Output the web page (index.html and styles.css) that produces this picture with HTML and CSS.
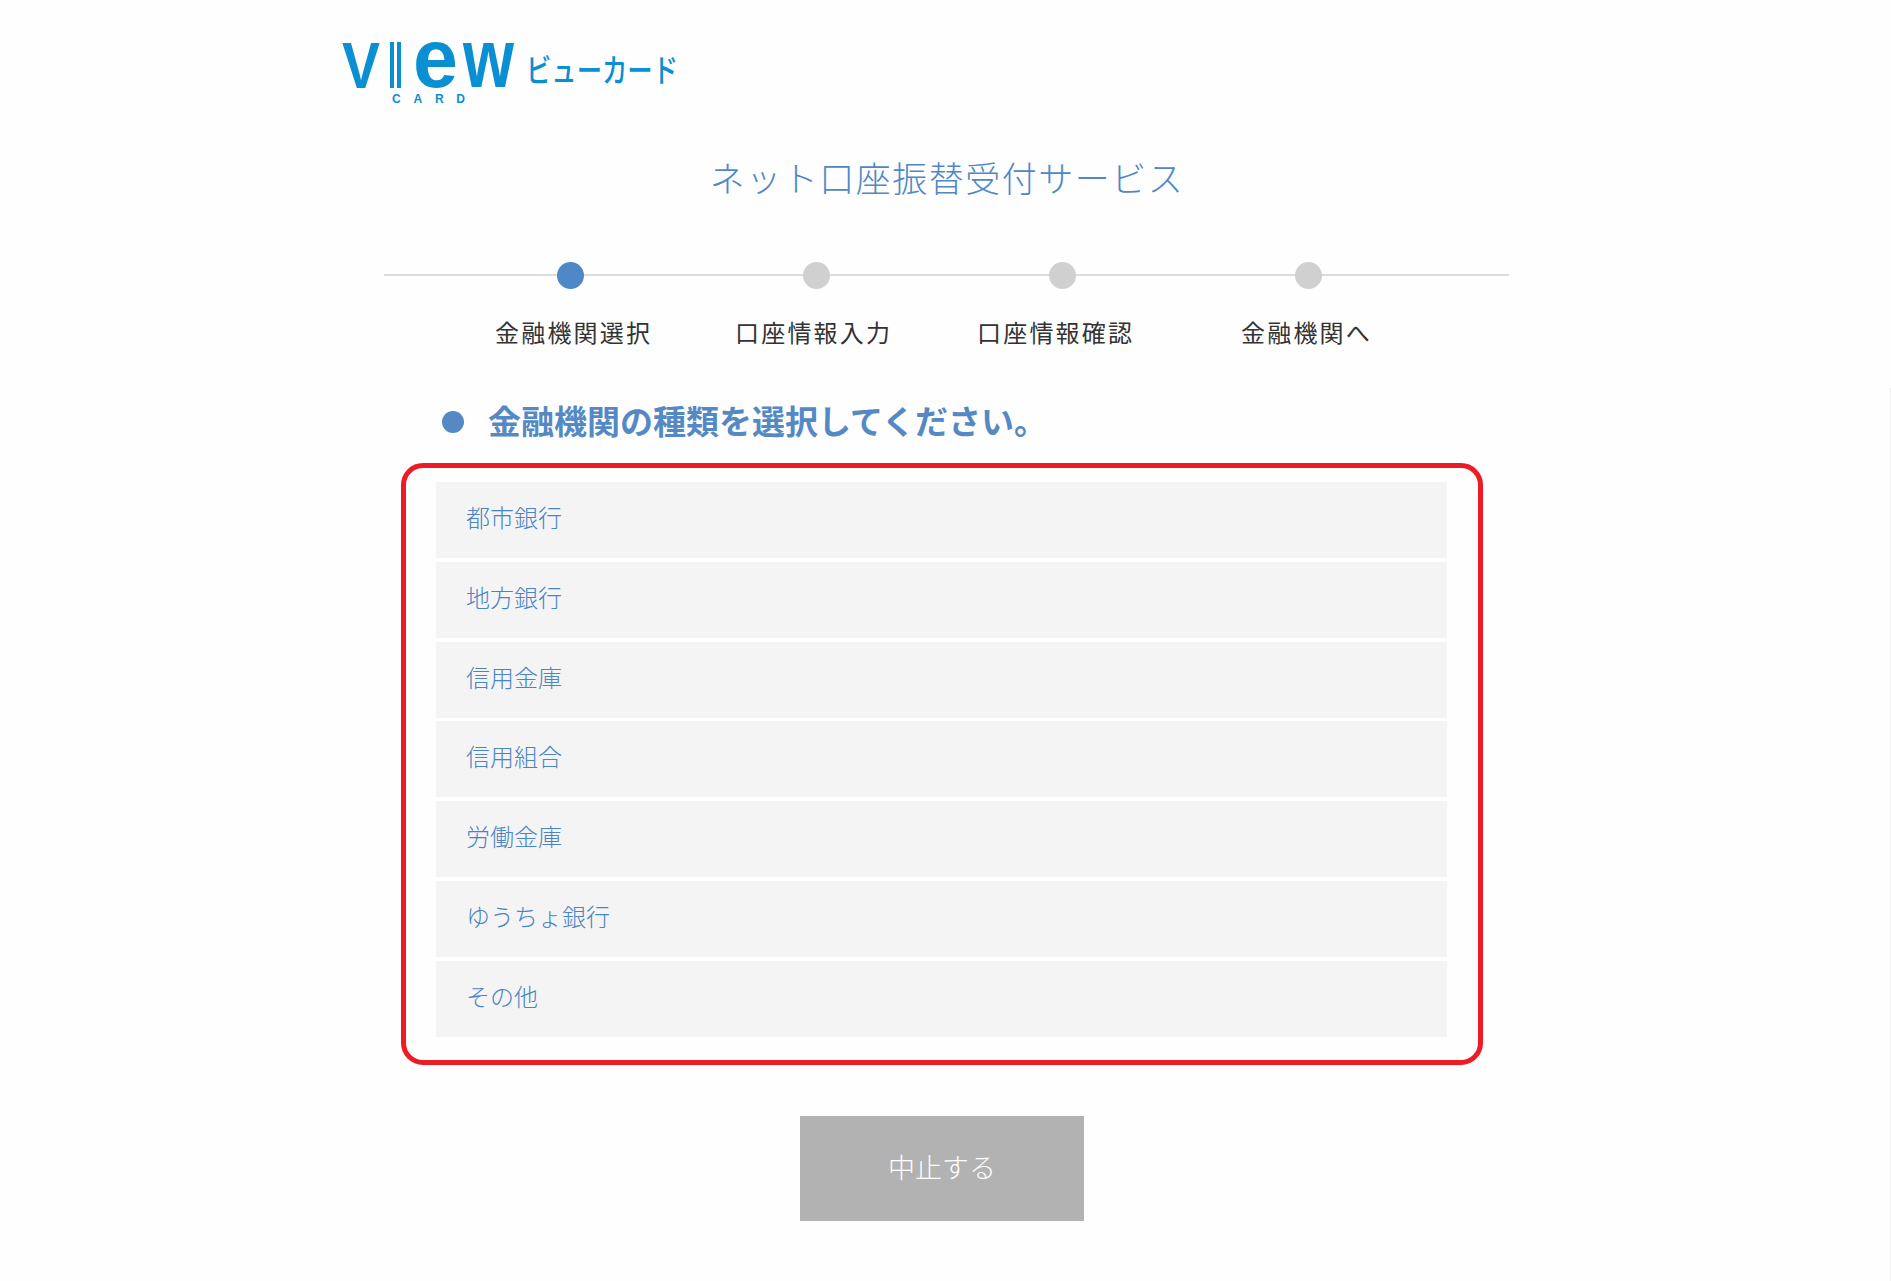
FILE: index.html
```html
<!DOCTYPE html>
<html lang="ja">
<head>
<meta charset="utf-8">
<title>ネット口座振替受付サービス</title>
<link rel="stylesheet" href="styles.css">
</head>
<body>
<div class="page">
  <header class="logo-bar">
    <svg class="logo" width="380" height="110" viewBox="-5 -35 380 110" role="img" aria-label="VIEW CARD ビューカード">
      <text class="logo-mark" x="-1" y="51" textLength="38" lengthAdjust="spacingAndGlyphs">V</text>
      <rect class="logo-fill" x="47" y="5" width="4" height="46"></rect>
      <rect class="logo-fill" x="54" y="5" width="4" height="46"></rect>
      <text class="logo-mark logo-low" x="70" y="50" textLength="45" lengthAdjust="spacingAndGlyphs">e</text>
      <text class="logo-mark logo-low" x="120" y="50" textLength="51" lengthAdjust="spacingAndGlyphs">w</text>
      <text class="logo-card" x="49" y="66" textLength="73">CARD</text>
      <text class="logo-kana" x="183" y="45" textLength="152" lengthAdjust="spacingAndGlyphs">ビューカード</text>
    </svg>
  </header>

  <h1 class="title">ネット口座振替受付サービス</h1>

  <div class="stepper">
    <div class="dots">
      <span class="dot dot-active"></span>
      <span class="dot"></span>
      <span class="dot"></span>
      <span class="dot"></span>
    </div>
    <div class="labels">
      <span>金融機関選択</span>
      <span>口座情報入力</span>
      <span>口座情報確認</span>
      <span>金融機関へ</span>
    </div>
  </div>

  <h2 class="heading"><span class="bullet"></span>金融機関の種類を選択してください。</h2>

  <div class="box">
    <a class="row">都市銀行</a>
    <a class="row">地方銀行</a>
    <a class="row">信用金庫</a>
    <a class="row">信用組合</a>
    <a class="row">労働金庫</a>
    <a class="row">ゆうちょ銀行</a>
    <a class="row">その他</a>
  </div>

  <div class="actions">
    <button class="cancel" type="button">中止する</button>
  </div>
</div>
<div class="edge"></div>
</body>
</html>
```

FILE: styles.css
```css
html, body {
  margin: 0;
  padding: 0;
  background: #fefefe;
}

body {
  font-family: "Noto Sans CJK JP", "Noto Sans", sans-serif;
  height: 1281px;
  overflow: hidden;
  position: relative;
}

.page {
  width: 1891px;
}

.logo-bar {
  height: 115px;
  padding: 2px 0 0 338px;
  box-sizing: border-box;
}

.logo {
  display: block;
}

.logo-fill {
  fill: #0a8fd3;
}

.logo-mark {
  font-family: "Liberation Sans", sans-serif;
  font-weight: 700;
  font-size: 64px;
  fill: #0a8fd3;
}

.logo-low {
  font-size: 84px;
}

.logo-card {
  font-family: "Liberation Sans", sans-serif;
  font-weight: 700;
  font-size: 12px;
  fill: #0a8fd3;
}

.logo-kana {
  font-family: "Noto Sans CJK JP", sans-serif;
  font-weight: 500;
  font-size: 32px;
  fill: #0a8fd3;
}

.title {
  margin: 0;
  padding-left: 3px;
  font-size: 35px;
  font-weight: 300;
  line-height: 124px;
  height: 126px;
  letter-spacing: 1.5px;
  text-align: center;
  color: #4f88c6;
}

.dots {
  position: relative;
  display: flex;
  gap: 219px;
  width: 1125px;
  margin-left: 384px;
  padding-left: 173px;
  box-sizing: border-box;
  height: 27px;
  margin-top: 21px;
}

.dots::before {
  content: "";
  position: absolute;
  left: 0;
  right: 0;
  top: 12px;
  height: 2px;
  background: #dcdcdc;
}

.dot {
  position: relative;
  flex: none;
  width: 27px;
  height: 27px;
  border-radius: 50%;
  background: #d0d0d0;
}

.dot-active {
  background: #4f88c6;
}

.labels {
  display: grid;
  grid-template-columns: 240px 242px 264px auto;
  padding-left: 495px;
  margin-top: 25px;
  font-size: 24px;
  line-height: 36px;
  letter-spacing: 2.2px;
  color: #333;
  font-weight: 400;
}

.heading {
  display: flex;
  align-items: center;
  margin: 0;
  padding: 46px 0 0 442px;
  height: 48px;
  font-size: 33px;
  line-height: 48px;
  font-weight: 700;
  color: #5589c4;
}

.bullet {
  flex: none;
  width: 22px;
  height: 22px;
  margin-top: 4px;
  margin-right: 24px;
  border-radius: 50%;
  background: #5589c4;
}

.box {
  display: flex;
  flex-direction: column;
  gap: 3.8px;
  box-sizing: border-box;
  width: 1082px;
  height: 602px;
  margin: 19px 0 0 401px;
  padding: 14px 31px 0 30px;
  border: 5px solid #ed1c24;
  border-radius: 22px;
}

.row {
  display: flex;
  align-items: center;
  box-sizing: border-box;
  height: 76px;
  padding: 0 0 7px 30px;
  background: #f4f4f4;
  font-size: 24px;
  font-weight: 300;
  color: #4a84c4;
}

.actions {
  margin-top: 51px;
  padding-left: 800px;
}

.cancel {
  display: block;
  box-sizing: border-box;
  width: 284px;
  height: 105px;
  border: 0;
  padding: 0 0 4px;
  background: #b2b2b2;
  color: #fff;
  font-family: inherit;
  font-size: 27px;
  font-weight: 300;
}

.edge {
  position: absolute;
  top: 388px;
  bottom: 0;
  right: 0;
  width: 1px;
  background: #efefef;
}
```
